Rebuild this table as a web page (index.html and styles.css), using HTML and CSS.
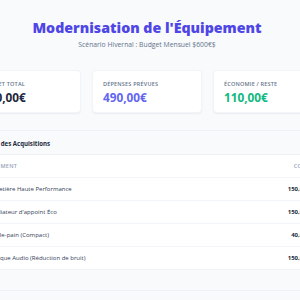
FILE: index.html
```html
<!DOCTYPE html>
<html lang="fr">
<head>
<meta charset="utf-8">
<title>Modernisation de l'Équipement</title>
<link rel="stylesheet" href="styles.css">
</head>
<body>
<main class="page">
  <header class="hero">
    <h1 class="title">Modernisation de l'Équipement</h1>
    <p class="subtitle">Scénario Hivernal : Budget Mensuel $600€$</p>
  </header>
  <section class="stats">
    <div class="card">
      <div class="label">Budget Total</div>
      <div class="value value-dark">600,00€</div>
    </div>
    <div class="card">
      <div class="label">Dépenses Prévues</div>
      <div class="value value-indigo">490,00€</div>
    </div>
    <div class="card">
      <div class="label">Économie / Reste</div>
      <div class="value value-green">110,00€</div>
    </div>
  </section>
  <section class="panel">
    <div class="panel-head">Détail des Acquisitions</div>
    <table class="table">
      <thead>
        <tr><th>Équipement</th><th class="num">Coût</th></tr>
      </thead>
      <tbody>
        <tr><td>Cafetière Haute Performance</td><td class="num">150,00€</td></tr>
        <tr><td>Radiateur d'appoint Éco</td><td class="num">150,00€</td></tr>
        <tr><td>Grille-pain (Compact)</td><td class="num">40,00€</td></tr>
        <tr><td>Casque Audio (Réduction de bruit)</td><td class="num">150,00€</td></tr>
      </tbody>
    </table>
    <div class="panel-foot"></div>
  </section>
</main>
</body>
</html>
```

FILE: styles.css
```css
* { box-sizing: border-box; }
html, body { margin: 0; }
body {
  background: #f8fafc;
  font-family: "Open Sans", "Noto Sans", sans-serif;
  color: #1e293b;
  display: flex;
  justify-content: center;
  padding: 0 6px 0 0;
  overflow: hidden;
}
.page {
  flex: 0 0 352px;
  width: 352px;
  padding-top: 18px;
}
.hero { text-align: center; }
.title {
  margin: 0;
  font-size: 14.2px;
  line-height: 20px;
  font-weight: 800;
  color: #4f46e5;
}
.subtitle {
  margin: 2px 0 0;
  font-size: 6.8px;
  line-height: 10px;
  color: #64748b;
}
.stats {
  margin-top: 20px;
  display: grid;
  grid-template-columns: repeat(3, 110px);
  gap: 11px;
}
.card {
  background: #fff;
  border-radius: 4px;
  height: 43px;
  padding: 10px 10px 0;
  box-shadow: 0 1px 2px rgba(15, 23, 42, 0.06);
  border: 1px solid #f1f5f9;
}
.label {
  font-size: 5.5px;
  line-height: 7px;
  text-transform: uppercase;
  letter-spacing: 0.2px;
  color: #64748b;
  font-weight: 600;
}
.value {
  margin-top: 2px;
  font-size: 11.8px;
  line-height: 15px;
  font-weight: 700;
}
.value-dark { color: #1e293b; }
.value-indigo { color: #6366f1; }
.value-green { color: #10b981; }
.panel {
  margin-top: 17px;
  background: #fff;
  border-radius: 4px;
  border: 1px solid #eef2f6;
  box-shadow: 0 1px 2px rgba(15, 23, 42, 0.05);
  overflow: hidden;
}
.panel-head {
  height: 24px;
  padding: 2px 12px 0 9px;
  display: flex;
  align-items: center;
  background: #f8fafc;
  border-bottom: 1px solid #eef2f6;
  font-size: 6.1px;
  font-weight: 700;
  color: #1e293b;
}
.table {
  width: 100%;
  border-collapse: collapse;
}
.table th {
  height: 22px;
  padding: 0 12px 0 7px;
  text-align: left;
  font-size: 5.5px;
  font-weight: 600;
  letter-spacing: 0.3px;
  text-transform: uppercase;
  color: #94a3b8;
}
.table td {
  height: 23px;
  padding: 0 12px 0 18px;
  font-size: 6px;
  color: #334155;
  border-top: 1px solid #f1f5f9;
}
.table .num { text-align: right; }
.table tbody .num { font-weight: 700; color: #1e293b; }
.panel-foot {
  height: 21px;
  background: #f8fafc;
  border-top: 1px solid #f1f5f9;
}
```
